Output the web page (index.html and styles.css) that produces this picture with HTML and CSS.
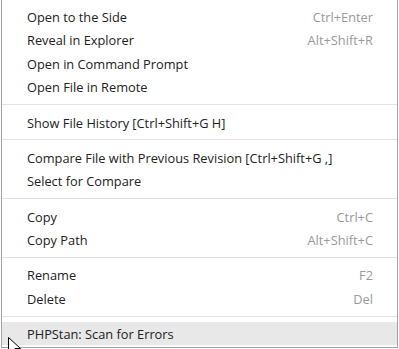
FILE: index.html
```html
<!DOCTYPE html>
<html lang="en">
<head>
  <meta charset="UTF-8" />
  <title>Context menu</title>
  <link rel="stylesheet" href="styles.css">
</head>
<body>
  <div class="menu">
    <div class="item"><span class="label">Open to the Side</span><span class="key">Ctrl+Enter</span></div>
    <div class="item"><span class="label">Reveal in Explorer</span><span class="key">Alt+Shift+R</span></div>
    <div class="item"><span class="label">Open in Command Prompt</span></div>
    <div class="item"><span class="label">Open File in Remote</span></div>
    <div class="sep"></div>
    <div class="item"><span class="label">Show File History [Ctrl+Shift+G H]</span></div>
    <div class="sep"></div>
    <div class="item"><span class="label">Compare File with Previous Revision [Ctrl+Shift+G ,]</span></div>
    <div class="item"><span class="label">Select for Compare</span></div>
    <div class="sep"></div>
    <div class="item"><span class="label">Copy</span><span class="key">Ctrl+C</span></div>
    <div class="item"><span class="label">Copy Path</span><span class="key">Alt+Shift+C</span></div>
    <div class="sep"></div>
    <div class="item"><span class="label">Rename</span><span class="key">F2</span></div>
    <div class="item"><span class="label">Delete</span><span class="key">Del</span></div>
    <div class="sep"></div>
    <div class="item active"><span class="label">PHPStan: Scan for Errors</span></div>
  </div>

  <!-- mouse pointer -->
  <svg class="cursor" width="16" height="22" viewBox="0 0 16 22">
    <path d="M0.5 0.5 L0.5 16.5 L4.5 12.5 L7.5 19.5 L10 18.5 L7 11.5 L12.5 11.5 Z" fill="#fff" stroke="#000" stroke-width="1" />
  </svg>
</body>
</html>
```

FILE: styles.css
```css
body {
  margin: 0;
  background: #fff;
  font-family: 'Open Sans', 'Noto Sans', sans-serif;
  font-size: 12.8px;
  color: #222;
  width: 399px;
  height: 349px;
  overflow: hidden;
  position: relative;
}
.menu {
  margin-left: 1px;
  width: 395px;
  height: 341px;
  border: 1px solid #a3a3a3;
  border-top: none;
  padding: 4.5px 0 1.5px;
  box-sizing: content-box;
  background: #fff;
}
.item {
  height: 23.5px;
  box-sizing: border-box;
  display: flex;
  align-items: center;
  justify-content: space-between;
  padding: 1px 24px 0 25px;
}
.item.active {
  background: #e8e8e8;
}
.key {
  color: #9a9a9a;
}
.sep {
  height: 11.8px;
  display: flex;
  align-items: center;
}
.sep::after {
  content: '';
  display: block;
  width: 100%;
  height: 1px;
  background: #e3e3e3;
}
.cursor {
  position: absolute;
  left: 8px;
  top: 337px;
}
```
